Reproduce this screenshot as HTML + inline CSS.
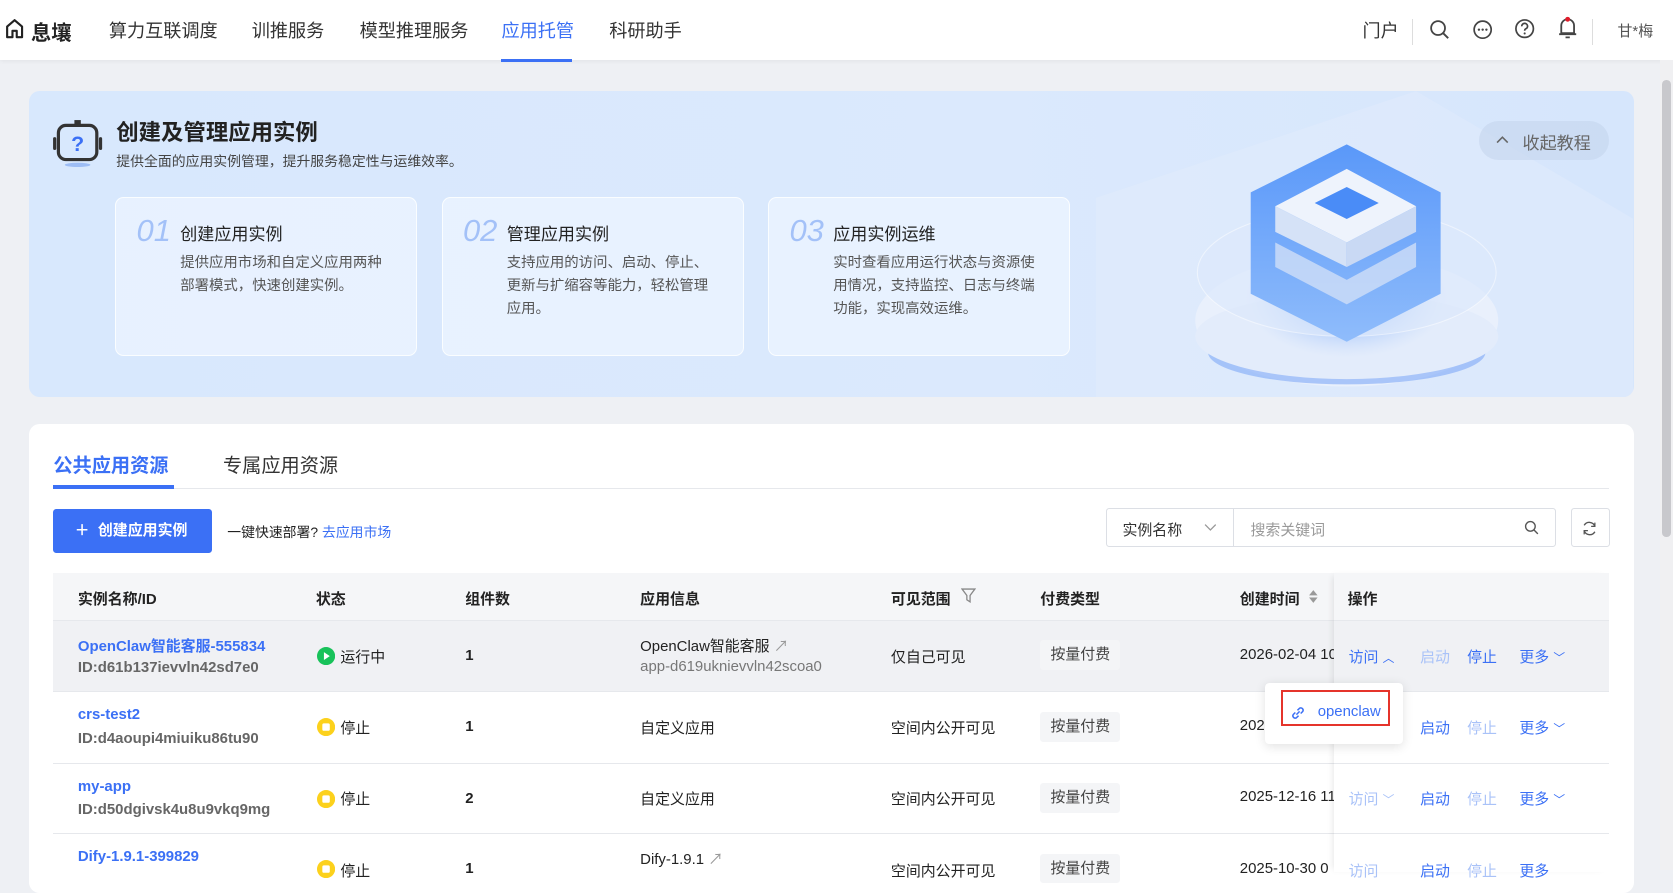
<!DOCTYPE html>
<html><head><meta charset="utf-8">
<style>
html{zoom:1.06696}
*{box-sizing:border-box;margin:0;padding:0}
body{width:1568px;height:815px;overflow:hidden;background:#eef0f4;font-family:"Liberation Sans","Noto Sans CJK SC",sans-serif;color:#222;position:relative}
.a{position:absolute;white-space:nowrap}
.hdr{position:absolute;left:0;top:0;width:1568px;height:56px;background:#fff;box-shadow:0 1px 4px rgba(0,0,0,.06)}
.nav{font-size:17px;color:#333;top:16px}
.blue{color:#3b70f5}
.banner{position:absolute;left:27px;top:85px;width:1504px;height:287px;border-radius:10px;background:linear-gradient(90deg,#d8e8fd 0%,#dbe9fd 60%,#d6e6fc 100%);overflow:hidden}
.card{position:absolute;top:100px;width:283px;height:149px;border-radius:8px;background:rgba(236,244,255,.75);border:1px solid rgba(255,255,255,.8)}
.card .n{position:absolute;left:19px;top:14px;font-size:29px;font-style:italic;color:#a3c1f8;font-weight:300}
.card .t{position:absolute;left:60px;top:20px;font-size:16px;color:#222}
.card .d{position:absolute;left:60px;top:50px;width:200px;font-size:13.5px;color:#555;line-height:21.5px;white-space:normal}
.main{position:absolute;left:27px;top:397px;width:1504px;height:440px;background:#fff;border-radius:10px}
.th{font-size:14px;font-weight:bold;color:#222;top:551px}
.td{font-size:14px;color:#222}
.lnk{color:#3b70f5}
.dis{color:#a9c2f8}
.tag{position:absolute;left:975px;width:75px;height:28px;background:#f4f5f7;border-radius:3px;font-size:14px;color:#444;text-align:center;line-height:28px}
.row{position:absolute;left:50px;width:1458px;border-bottom:1px solid #e6e8ec}
.id{color:#666;font-weight:bold}
</style></head><body>
<div class="hdr"></div>
<svg class="a" style="left:5px;top:17px" width="18" height="20" viewBox="0 0 18 20"><path d="M2 8 L9 2 L16 8 V18 H11 V12 H7 V18 H2 Z" fill="none" stroke="#222" stroke-width="2" stroke-linejoin="round"/></svg>
<div class="a" style="left:29px;top:15px;font-size:19px;font-weight:bold;color:#222">息壤</div>
<div class="a nav" style="left:102px">算力互联调度</div>
<div class="a nav" style="left:236px">训推服务</div>
<div class="a nav" style="left:337px">模型推理服务</div>
<div class="a nav blue" style="left:470px">应用托管</div>
<div class="a" style="left:470px;top:55px;width:66px;height:3px;background:#3b70f5"></div>
<div class="a nav" style="left:571px">科研助手</div>
<div class="a" style="left:1277px;top:16px;font-size:17px;color:#333">门户</div>
<div class="a" style="left:1323px;top:18px;width:1px;height:24px;background:#ddd"></div>
<svg class="a" style="left:1339px;top:18px" width="20" height="20" viewBox="0 0 20 20"><circle cx="8.5" cy="8.5" r="6.5" fill="none" stroke="#444" stroke-width="1.7"/><path d="M13.5 13.5 L18 18" stroke="#444" stroke-width="1.8"/></svg>
<svg class="a" style="left:1380px;top:18px" width="20" height="20" viewBox="0 0 20 20"><circle cx="10" cy="10" r="8" fill="none" stroke="#444" stroke-width="1.6"/><circle cx="6.5" cy="10" r="1.1" fill="#444"/><circle cx="10" cy="10" r="1.1" fill="#444"/><circle cx="13.5" cy="10" r="1.1" fill="#444"/></svg>
<svg class="a" style="left:1419px;top:17px" width="20" height="20" viewBox="0 0 20 20"><circle cx="10" cy="10" r="8.2" fill="none" stroke="#444" stroke-width="1.6"/><path d="M7.3 7.8 A2.7 2.7 0 1 1 10.8 10.3 Q10 10.7 10 12" fill="none" stroke="#444" stroke-width="1.6"/><circle cx="10" cy="14.5" r="1" fill="#444"/></svg>
<svg class="a" style="left:1459px;top:14px" width="20" height="24" viewBox="0 0 20 24"><path d="M4 17 V10 A6 6 0 0 1 16 10 V17 Z M2 18 H18 M8 21 H12" fill="none" stroke="#444" stroke-width="1.7"/><circle cx="10" cy="4" r="2.3" fill="#e01b2a"/></svg>
<div class="a" style="left:1492px;top:18px;width:1px;height:24px;background:#ddd"></div>
<div class="a" style="left:1516px;top:19px;font-size:14px;color:#555">甘*梅</div>
<div class="a" style="left:1556px;top:56px;width:12px;height:759px;background:#f0f0f2"></div>
<div class="a" style="left:1558px;top:75px;width:8px;height:428px;background:#c8c8cc;border-radius:4px"></div>

<div class="banner">
  <svg class="a" style="left:1000px;top:0" width="504" height="287" viewBox="0 0 504 287">
    <defs><radialGradient id="g" cx="50%" cy="50%" r="50%"><stop offset="0" stop-color="#3f82f8"/><stop offset="1" stop-color="#b8d3fb" stop-opacity="0"/></radialGradient>
    <linearGradient id="c" x1="0" y1="0" x2="0" y2="1"><stop offset="0" stop-color="#5a98f9"/><stop offset="1" stop-color="#8fbcfb"/></linearGradient></defs>
    <path d="M0 100 L300 0 L504 120 L504 287 L0 287Z" fill="#e2ecfb" opacity=".5"/>
    <ellipse cx="235" cy="215" rx="142" ry="62" fill="#e9f0fc"/>
    <ellipse cx="235" cy="245" rx="130" ry="30" fill="#7fa9f6" opacity=".6"/>
    <ellipse cx="235" cy="230" rx="142" ry="40" fill="#e3ecfb"/>
    <ellipse cx="235" cy="195" rx="95" ry="55" fill="url(#g)"/>
    <ellipse cx="235" cy="170" rx="140" ry="60" fill="#dde9fc" opacity=".7" stroke="#fff" stroke-opacity=".7"/>
    <path d="M145 95 L235 50 L323 95 L323 190 L235 235 L145 190Z" fill="url(#c)"/>
    <path d="M168 108 L235 73 L300 108 L235 142Z" fill="#eef3fc"/>
    <path d="M168 108 L235 142 L235 165 L168 132Z" fill="#d5e2f7"/>
    <path d="M300 108 L235 142 L235 165 L300 132Z" fill="#c9d9f4"/>
    <path d="M205 105 L235 90 L265 105 L235 120Z" fill="#4a8cf7"/>
    <path d="M168 142 L235 177 L300 142 L300 165 L235 200 L168 165Z" fill="#cfdff8" opacity=".8"/>
  </svg>
  <div class="a" style="left:1359px;top:28px;width:122px;height:37px;border-radius:19px;background:rgba(195,212,235,.55)"></div>
  <svg class="a" style="left:1375px;top:41px" width="12" height="10" viewBox="0 0 12 10"><path d="M1 8 L6 3 L11 8" fill="none" stroke="#666" stroke-width="1.5"/></svg>
  <div class="a" style="left:1400px;top:36px;font-size:16px;color:#666">收起教程</div>
  <svg class="a" style="left:22px;top:27px" width="48" height="46" viewBox="0 0 48 46"><rect x="6" y="6" width="36" height="32" rx="7" fill="none" stroke="#333" stroke-width="3"/><rect x="1" y="17" width="3" height="12" rx="1.5" fill="#333"/><rect x="44" y="17" width="3" height="12" rx="1.5" fill="#333"/><rect x="21" y="1" width="6" height="4" fill="#333"/><text x="24" y="30" text-anchor="middle" font-size="20" font-weight="bold" fill="#3b70f5" font-family="Liberation Sans">?</text><ellipse cx="24" cy="43" rx="12" ry="2" fill="#9dbdf5"/></svg>
  <div class="a" style="left:82px;top:23px;font-size:21px;font-weight:bold;color:#222">创建及管理应用实例</div>
  <div class="a" style="left:82px;top:56px;font-size:13px;color:#444">提供全面的应用实例管理，提升服务稳定性与运维效率。</div>
  <div class="card" style="left:81px"><div class="n">01</div><div class="t">创建应用实例</div><div class="d">提供应用市场和自定义应用两种部署模式，快速创建实例。</div></div>
  <div class="card" style="left:387px"><div class="n">02</div><div class="t">管理应用实例</div><div class="d">支持应用的访问、启动、停止、更新与扩缩容等能力，轻松管理应用。</div></div>
  <div class="card" style="left:693px"><div class="n">03</div><div class="t">应用实例运维</div><div class="d">实时查看应用运行状态与资源使用情况，支持监控、日志与终端功能，实现高效运维。</div></div>
</div>

<div class="main"></div>
<div class="a" style="left:50px;top:422px;font-size:18px;font-weight:bold;color:#3b70f5">公共应用资源</div>
<div class="a" style="left:209px;top:422px;font-size:18px;color:#333">专属应用资源</div>
<div class="a" style="left:50px;top:457px;width:1458px;height:1px;background:#e6e8ec"></div>
<div class="a" style="left:50px;top:455px;width:113px;height:3px;background:#3b70f5"></div>
<div class="a" style="left:50px;top:477px;width:149px;height:41px;background:#3b70f5;border-radius:3px;color:#fff;font-size:14px;font-weight:bold;line-height:41px;padding-left:20px">＋&nbsp; 创建应用实例</div>
<div class="a" style="left:213px;top:488px;font-size:13px;color:#222">一键快速部署? <span class="lnk">去应用市场</span></div>
<div class="a" style="left:1037px;top:476px;width:421px;height:37px;border:1px solid #dcdfe5;border-radius:3px"></div>
<div class="a" style="left:1156px;top:477px;width:1px;height:35px;background:#dcdfe5"></div>
<div class="a" style="left:1052px;top:486px;font-size:14px;color:#333">实例名称</div>
<svg class="a" style="left:1128px;top:490px" width="12" height="8" viewBox="0 0 12 8"><path d="M1 1.5 L6 6.5 L11 1.5" fill="none" stroke="#999" stroke-width="1.2"/></svg>
<div class="a" style="left:1172px;top:486px;font-size:14px;color:#999">搜索关键词</div>
<svg class="a" style="left:1428px;top:487px" width="14" height="14" viewBox="0 0 14 14"><circle cx="6" cy="6" r="4.5" fill="none" stroke="#555" stroke-width="1.3"/><path d="M9.3 9.3 L13 13" stroke="#555" stroke-width="1.3"/></svg>
<div class="a" style="left:1472px;top:476px;width:37px;height:37px;border:1px solid #dcdfe5;border-radius:3px"></div>
<svg class="a" style="left:1482px;top:487px" width="16" height="16" viewBox="0 0 16 16"><path d="M13 6 A5.5 5.5 0 0 0 3 5 M3 10 A5.5 5.5 0 0 0 13 11" fill="none" stroke="#555" stroke-width="1.3"/><path d="M13 2.5 V6 H9.5" fill="none" stroke="#555" stroke-width="1.2"/><path d="M3 13.5 V10 H6.5" fill="none" stroke="#555" stroke-width="1.2"/></svg>

<div class="a" style="left:50px;top:537px;width:1458px;height:45px;background:#f5f6f8;border-bottom:1px solid #e6e8ec"></div>
<div class="a" style="left:50px;top:582px;width:1458px;height:66px;background:#f0f1f4"></div>
<div class="row" style="top:582px;height:67px"></div>
<div class="row" style="top:649px;height:67px"></div>
<div class="row" style="top:716px;height:66px"></div>
<div class="a" style="left:1250px;top:537px;width:258px;height:280px;box-shadow:-4px 0 6px -3px rgba(0,0,0,.1)"></div>

<div class="a th" style="left:73px">实例名称/ID</div>
<div class="a th" style="left:296px">状态</div>
<div class="a th" style="left:436px">组件数</div>
<div class="a th" style="left:600px">应用信息</div>
<div class="a th" style="left:835px">可见范围</div>
<svg class="a" style="left:901px;top:551px" width="14" height="14" viewBox="0 0 14 14"><path d="M1 1 H13 L8.5 7 V13 L5.5 11 V7 Z" fill="none" stroke="#888" stroke-width="1.2"/></svg>
<div class="a th" style="left:975px">付费类型</div>
<div class="a th" style="left:1162px">创建时间</div>
<svg class="a" style="left:1226px;top:552px" width="10" height="14" viewBox="0 0 10 14"><path d="M1 6 L5 1 L9 6Z M1 8 L5 13 L9 8Z" fill="#999"/></svg>
<div class="a th" style="left:1263px">操作</div>

<!-- row 1 -->
<div class="a td lnk" style="left:73px;top:595px;font-weight:bold">OpenClaw智能客服-555834</div>
<div class="a td id" style="left:73px;top:618px">ID:d61b137ievvln42sd7e0</div>
<svg class="a" style="left:297px;top:606px" width="17" height="17" viewBox="0 0 17 17"><circle cx="8.5" cy="8.5" r="8.5" fill="#18c25a"/><path d="M6.5 4.8 L12 8.5 L6.5 12.2Z" fill="#fff"/></svg>
<div class="a td" style="left:319px;top:605px">运行中</div>
<div class="a td" style="left:436px;top:606px;font-weight:bold">1</div>
<div class="a td" style="left:600px;top:595px">OpenClaw智能客服 <span style="color:#999">↗</span></div>
<div class="a td" style="left:600px;top:617px;color:#777">app-d619uknievvln42scoa0</div>
<div class="a td" style="left:835px;top:605px">仅自己可见</div>
<div class="tag" style="top:600px">按量付费</div>
<div class="a td" style="left:1162px;top:605px;width:88px;overflow:hidden">2026-02-04 10:00</div>
<div class="a td lnk" style="left:1264px;top:605px">访问 <span style="font-size:11px">︿</span></div>
<div class="a td dis" style="left:1331px;top:605px">启动</div>
<div class="a td lnk" style="left:1375px;top:605px">停止</div>
<div class="a td lnk" style="left:1424px;top:605px">更多 <span style="font-size:11px">﹀</span></div>

<!-- row 2 -->
<div class="a td lnk" style="left:73px;top:662px;font-weight:bold">crs-test2</div>
<div class="a td id" style="left:73px;top:684px">ID:d4aoupi4miuiku86tu90</div>
<svg class="a" style="left:297px;top:673px" width="17" height="17" viewBox="0 0 17 17"><circle cx="8.5" cy="8.5" r="8.5" fill="#fcd11c"/><rect x="5" y="5" width="7" height="7" rx="1.5" fill="#fff"/></svg>
<div class="a td" style="left:319px;top:672px">停止</div>
<div class="a td" style="left:436px;top:673px;font-weight:bold">1</div>
<div class="a td" style="left:600px;top:672px">自定义应用</div>
<div class="a td" style="left:835px;top:672px">空间内公开可见</div>
<div class="tag" style="top:667px">按量付费</div>
<div class="a td" style="left:1162px;top:672px">202</div>
<div class="a td lnk" style="left:1331px;top:672px">启动</div>
<div class="a td dis" style="left:1375px;top:672px">停止</div>
<div class="a td lnk" style="left:1424px;top:672px">更多 <span style="font-size:11px">﹀</span></div>

<!-- row 3 -->
<div class="a td lnk" style="left:73px;top:729px;font-weight:bold">my-app</div>
<div class="a td id" style="left:73px;top:751px">ID:d50dgivsk4u8u9vkq9mg</div>
<svg class="a" style="left:297px;top:740px" width="17" height="17" viewBox="0 0 17 17"><circle cx="8.5" cy="8.5" r="8.5" fill="#fcd11c"/><rect x="5" y="5" width="7" height="7" rx="1.5" fill="#fff"/></svg>
<div class="a td" style="left:319px;top:739px">停止</div>
<div class="a td" style="left:436px;top:740px;font-weight:bold">2</div>
<div class="a td" style="left:600px;top:739px">自定义应用</div>
<div class="a td" style="left:835px;top:739px">空间内公开可见</div>
<div class="tag" style="top:734px">按量付费</div>
<div class="a td" style="left:1162px;top:739px;width:88px;overflow:hidden">2025-12-16 11:00</div>
<div class="a td dis" style="left:1264px;top:739px">访问 <span style="font-size:11px">﹀</span></div>
<div class="a td lnk" style="left:1331px;top:739px">启动</div>
<div class="a td dis" style="left:1375px;top:739px">停止</div>
<div class="a td lnk" style="left:1424px;top:739px">更多 <span style="font-size:11px">﹀</span></div>

<!-- row 4 -->
<div class="a td lnk" style="left:73px;top:795px;font-weight:bold">Dify-1.9.1-399829</div>
<div class="a td" style="left:600px;top:795px">Dify-1.9.1 <span style="color:#999">↗</span></div>
<svg class="a" style="left:297px;top:806px" width="17" height="17" viewBox="0 0 17 17"><circle cx="8.5" cy="8.5" r="8.5" fill="#fcd11c"/><rect x="5" y="5" width="7" height="7" rx="1.5" fill="#fff"/></svg>
<div class="a td" style="left:319px;top:806px">停止</div>
<div class="a td" style="left:436px;top:806px;font-weight:bold">1</div>
<div class="a td" style="left:835px;top:806px">空间内公开可见</div>
<div class="tag" style="top:800px">按量付费</div>
<div class="a td" style="left:1162px;top:806px">2025-10-30 0</div>
<div class="a td dis" style="left:1264px;top:806px">访问</div>
<div class="a td lnk" style="left:1331px;top:806px">启动</div>
<div class="a td dis" style="left:1375px;top:806px">停止</div>
<div class="a td lnk" style="left:1424px;top:806px">更多</div>

<!-- popover -->
<div class="a" style="left:1186px;top:640px;width:129px;height:57px;background:#fff;border-radius:4px;box-shadow:0 2px 10px rgba(0,0,0,.12)"></div>
<div class="a" style="left:1201px;top:647px;width:102px;height:33px;border:2px solid #e5342b"></div>
<svg class="a" style="left:1209px;top:661px" width="15" height="15" viewBox="0 0 15 15"><path d="M6 9 L9 6 M5 7 L3 9 A2.2 2.2 0 0 0 6 12 L8 10 M7 5 L9 3 A2.2 2.2 0 0 1 12 6 L10 8" fill="none" stroke="#3b70f5" stroke-width="1.4"/></svg>
<div class="a" style="left:1235px;top:659px;font-size:14px;color:#3b70f5">openclaw</div>
</body></html>
